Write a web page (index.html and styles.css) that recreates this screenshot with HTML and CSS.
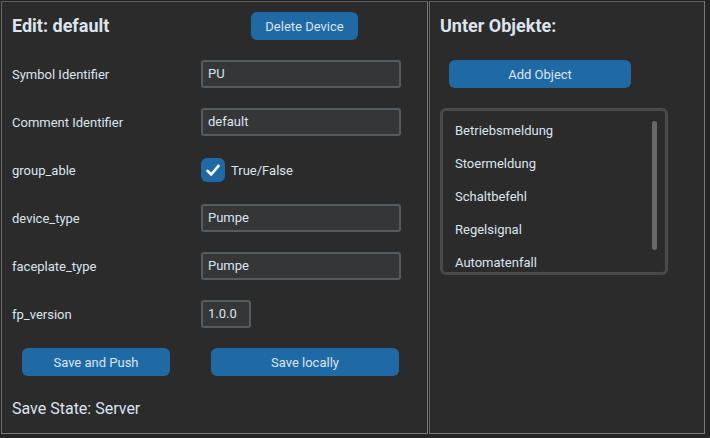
FILE: index.html
```html
<!DOCTYPE html>
<html lang="de">
<head>
<meta charset="utf-8">
<title>Edit: default</title>
<link rel="stylesheet" href="styles.css">
</head>
<body>
<div class="app">
  <section class="panel left">
    <div class="head">
      <h1 class="title">Edit: default</h1>
      <button class="btn delete">Delete Device</button>
    </div>
    <div class="form">
      <label class="lbl">Symbol Identifier</label>
      <div class="entry wide">PU</div>
      <label class="lbl">Comment Identifier</label>
      <div class="entry wide">default</div>
      <label class="lbl">group_able</label>
      <div class="check">
        <span class="box"><svg width="24" height="24" viewBox="0 0 24 24"><path d="M6.5 12.8 L10.2 16.5 L17.5 7.8" fill="none" stroke="#ffffff" stroke-width="2.6" stroke-linecap="round" stroke-linejoin="round"/></svg></span>
        <span class="check-text">True/False</span>
      </div>
      <label class="lbl">device_type</label>
      <div class="entry wide">Pumpe</div>
      <label class="lbl">faceplate_type</label>
      <div class="entry wide">Pumpe</div>
      <label class="lbl">fp_version</label>
      <div class="entry small">1.0.0</div>
    </div>
    <div class="actions">
      <button class="btn push">Save and Push</button>
      <button class="btn local">Save locally</button>
    </div>
    <div class="state">Save State: Server</div>
  </section>
  <section class="panel right">
    <h2 class="title">Unter Objekte:</h2>
    <button class="btn add">Add Object</button>
    <div class="list">
      <div class="item">Betriebsmeldung</div>
      <div class="item">Stoermeldung</div>
      <div class="item">Schaltbefehl</div>
      <div class="item">Regelsignal</div>
      <div class="item">Automatenfall</div>
      <div class="scrollbar"></div>
    </div>
  </section>
</div>
</body>
</html>
```

FILE: styles.css
```css
* { box-sizing: border-box; }
html, body { margin: 0; padding: 0; }
body {
  background: #242424;
  font-family: Roboto, "Noto Sans", sans-serif;
  color: #dce4ee;
  width: 710px;
  height: 438px;
  overflow: hidden;
}
.app {
  display: flex;
  gap: 1px;
  padding: 1px 0 0 1px;
}
.panel {
  background: #2b2b2b;
  border: 1px solid #7a7a7a;
  border-top-color: #5e5e5e;
  border-left-color: #6a6a6a;
  height: 433px;
}
.left { width: 427px; padding: 10px 0 0 10px; }
.right { width: 276px; padding: 10px 0 0 10px; }
.title {
  margin: 0;
  font-size: 18px;
  font-weight: 700;
  line-height: 28px;
  color: #dce4ee;
}
.head {
  display: grid;
  grid-template-columns: 239px 107px;
  align-items: center;
  height: 28px;
}
.head .delete { width: 107px; }
.btn {
  font-family: Roboto, "Noto Sans", sans-serif;
  font-size: 13px;
  color: #dce4ee;
  background: #1f6aa5;
  border: none;
  border-radius: 6px;
  height: 28px;
  padding: 0;
  display: block;
}
.form {
  margin-top: 20px;
  display: grid;
  grid-template-columns: 189px auto;
  grid-auto-rows: 28px;
  row-gap: 20px;
  align-items: center;
}
.lbl { font-size: 13px; }
.entry {
  height: 28px;
  background: #343638;
  border: 2px solid #565b5e;
  border-radius: 3px;
  font-size: 13px;
  line-height: 24px;
  padding-left: 5px;
}
.entry.wide { width: 200px; }
.entry.small { width: 50px; }
.check { display: flex; align-items: center; gap: 6px; }
.box {
  width: 24px; height: 24px;
  border-radius: 6px;
  background: #1f6aa5;
  display: block;
}
.box svg { display: block; }
.check-text { font-size: 13px; }
.actions {
  display: flex;
  margin-top: 20px;
  padding-left: 10px;
}
.push { width: 148px; }
.local { width: 188px; margin-left: 41px; }
.state {
  margin-top: 21px;
  font-size: 16px;
  line-height: 24px;
}
.add { width: 182px; margin: 20px 0 0 9px; }
.list {
  position: relative;
  margin-top: 20px;
  width: 228px;
  height: 167px;
  border: 3px solid #4a4a4a;
  border-radius: 6px;
  overflow: hidden;
  padding: 3px 0 0 12px;
}
.item {
  height: 33px;
  line-height: 33px;
  font-size: 13px;
}
.scrollbar {
  position: absolute;
  left: 209px;
  top: 10px;
  width: 5px;
  height: 129px;
  border-radius: 3px;
  background: #696969;
}
```
